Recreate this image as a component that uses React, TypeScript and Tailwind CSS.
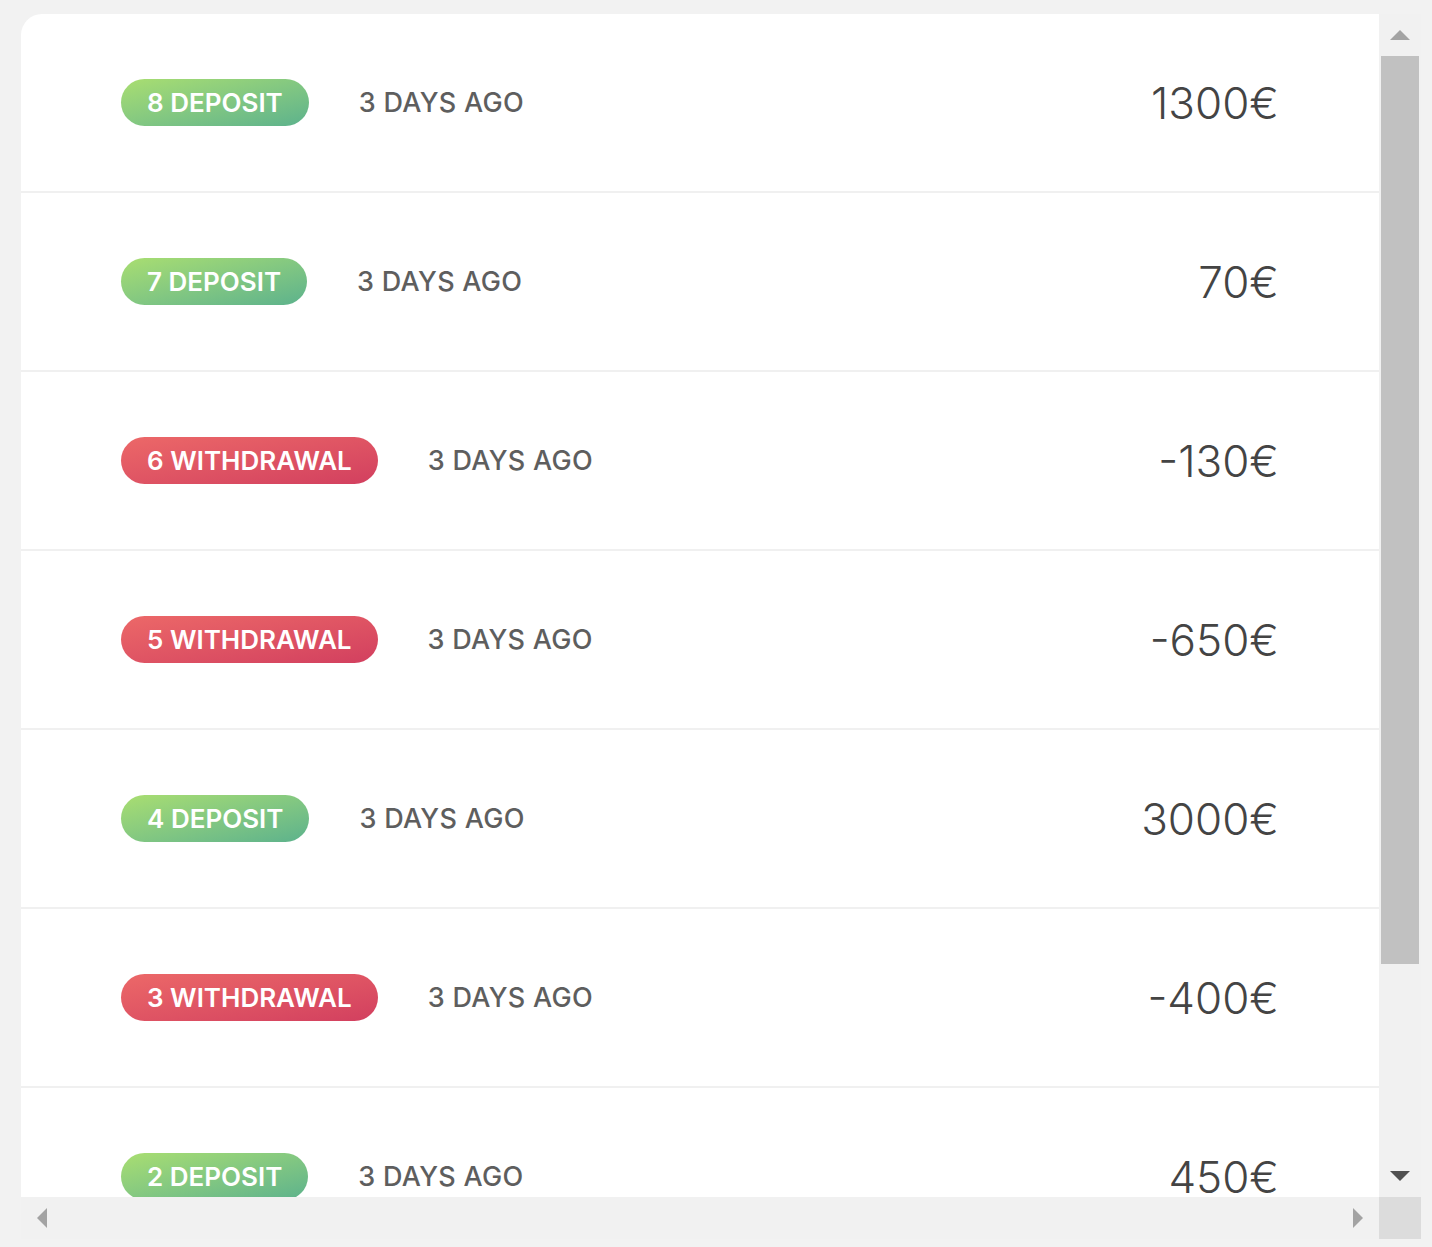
const rows = [
  { id: 8, type: "deposit", amount: "1300€" },
  { id: 7, type: "deposit", amount: "70€" },
  { id: 6, type: "withdrawal", amount: "-130€" },
  { id: 5, type: "withdrawal", amount: "-650€" },
  { id: 4, type: "deposit", amount: "3000€" },
  { id: 3, type: "withdrawal", amount: "-400€" },
  { id: 2, type: "deposit", amount: "450€" },
];

function Badge({ id, type }: { id: number; type: string }) {
  const isDeposit = type === "deposit";
  return (
    <span
      className={`flex h-[47px] items-center rounded-full px-[26px] text-[26px] font-semibold text-white ${
        isDeposit
          ? "bg-gradient-to-br from-[#a9de70] to-[#5cb28c]"
          : "bg-gradient-to-br from-[#ec6868] to-[#d23f5f]"
      }`}
    >
      {id} {isDeposit ? "DEPOSIT" : "WITHDRAWAL"}
    </span>
  );
}

export default function App() {
  return (
    <div className="h-[1247px] w-[1432px] bg-[#f2f2f2] pl-[21px] pt-[14px] font-['Inter','Liberation_Sans',sans-serif]">
      <div className="flex h-[1225px] w-[1400px] flex-col">
        <div className="flex h-[1183px]">
          {/* Scrolling list */}
          <div className="flex-1 overflow-hidden rounded-tl-[21px] bg-white">
            {rows.map((r) => (
              <div
                key={r.id}
                className="flex h-[179px] shrink-0 items-center border-b-2 border-[#f0f0f0] pl-[100px] pr-[100px]"
              >
                <Badge id={r.id} type={r.type} />
                <span className="ml-[50px] pt-[1px] text-[27px] font-medium tracking-[0.3px] text-[#5e5e5e]">
                  3 DAYS AGO
                </span>
                <span className="ml-auto text-[44px] font-light text-[#444]">{r.amount}</span>
              </div>
            ))}
          </div>

          {/* Vertical scrollbar */}
          <div className="flex w-[42px] flex-col bg-[#f1f1f1]">
            <div className="flex h-[42px] items-center justify-center">
              <svg width="20" height="10" viewBox="0 0 20 10">
                <polygon points="10,0 20,10 0,10" fill="#a3a3a3" />
              </svg>
            </div>
            <div className="mx-[2px] h-[908px] bg-[#c1c1c1]" />
            <div className="flex flex-1 items-end justify-center pb-[16px]">
              <svg width="20" height="10" viewBox="0 0 20 10">
                <polygon points="0,0 20,0 10,10" fill="#505050" />
              </svg>
            </div>
          </div>
        </div>

        {/* Horizontal scrollbar */}
        <div className="flex h-[42px]">
          <div className="flex flex-1 items-center justify-between bg-[#f1f1f1] pl-[16px] pr-[16px]">
            <svg width="10" height="20" viewBox="0 0 10 20">
              <polygon points="10,0 10,20 0,10" fill="#a3a3a3" />
            </svg>
            <svg width="10" height="20" viewBox="0 0 10 20">
              <polygon points="0,0 10,10 0,20" fill="#a3a3a3" />
            </svg>
          </div>
          <div className="w-[42px] bg-[#dcdcdc]" />
        </div>
      </div>
    </div>
  );
}
